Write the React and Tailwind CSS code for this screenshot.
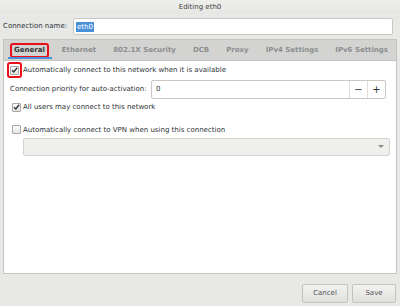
export default function App() {
  const tabs = ["General", "Ethernet", "802.1X Security", "DCB", "Proxy", "IPv4 Settings", "IPv6 Settings"];
  return (
    <div
      className="w-[400px] h-[306px] bg-[#e8e8e7] text-[#2e3436] text-[7px] flex flex-col overflow-hidden whitespace-nowrap"
      style={{ fontFamily: '"DejaVu Sans", sans-serif' }}
    >
      <div className="h-[14px] shrink-0 flex items-center justify-center bg-gradient-to-b from-[#eeeeec] to-[#e6e6e5] text-[#444]">
        Editing eth0
      </div>

      <div className="flex items-center h-[17px] shrink-0 mt-[4px] pl-[3px] pr-[7px]">
        <span className="w-[70px] shrink-0">Connection name:</span>
        <div className="flex-1 h-[17px] bg-white border border-[#cdc7c2] rounded-[2px] flex items-center pl-[2px]">
          <span className="bg-[#4a90d9] text-white px-[1px] leading-[10px]">eth0</span>
        </div>
      </div>

      <div className="mx-[3px] mt-[4px] flex flex-col h-[235px] shrink-0">
        <div className="h-[21px] shrink-0 bg-[#d3d3d2] border border-[#c4c4c3] border-b-0 flex items-center pl-[10px] gap-[17px] font-bold text-[#8b8e8f]">
          {tabs.map((t, i) =>
            i === 0 ? (
              <div key={t} className="relative h-full flex items-center -mx-[4px]">
                <span className="text-[#2e3436] border-2 border-[#e8101b] rounded-[3px] px-[2px] leading-[9px] py-[1px]">
                  {t}
                </span>
                <div className="absolute left-[-2px] right-[-3px] bottom-[1px] h-[2px] bg-[#4a90d9]" />
              </div>
            ) : (
              <span key={t}>{t}</span>
            )
          )}
        </div>

        <div className="flex-1 bg-white border border-[#c4c4c3] flex flex-col">
          <div className="flex items-center mt-[1px] ml-[3px]">
            <div className="w-[15px] h-[16px] border-2 border-[#e8101b] rounded-[3px] flex items-center justify-center">
              <Check checked />
            </div>
            <span className="ml-[1px]">Automatically connect to this network when it is available</span>
          </div>

          <div className="flex items-center mt-[2px] ml-[6px] mr-[10px]">
            <span className="w-[141px] shrink-0">Connection priority for auto-activation:</span>
            <div className="flex-1 h-[19px] bg-white border border-[#cdc7c2] rounded-[2px] flex items-center">
              <span className="flex-1 pl-[4px]">0</span>
              <div className="w-[18px] h-full border-l border-[#e0dedb] flex items-center justify-center text-[10px]">−</div>
              <div className="w-[18px] h-full border-l border-[#e0dedb] flex items-center justify-center text-[10px]">+</div>
            </div>
          </div>

          <div className="flex items-center mt-[3px] ml-[8px] gap-[2px]">
            <Check checked />
            <span>All users may connect to this network</span>
          </div>

          <div className="flex items-center mt-[12px] ml-[8px] gap-[2px]">
            <Check />
            <span>Automatically connect to VPN when using this connection</span>
          </div>

          <div className="ml-[19px] mr-[6px] mt-[3px] h-[18px] bg-[#efefee] border border-[#d6d3cf] rounded-[2px] flex items-center justify-end pr-[5px]">
            <svg width="6" height="4" viewBox="0 0 6 4">
              <path d="M0 0 L6 0 L3 3 Z" fill="#8a8a89" />
            </svg>
          </div>
        </div>
      </div>

      <div className="flex justify-end gap-[4px] mt-[10px] mr-[4px]">
        <button className="w-[46px] h-[19px] bg-gradient-to-b from-[#f2f2f1] to-[#e0e0df] border border-[#c4c1bd] rounded-[2px] text-[#555]">
          Cancel
        </button>
        <button className="w-[44px] h-[19px] bg-gradient-to-b from-[#f2f2f1] to-[#e0e0df] border border-[#c4c1bd] rounded-[2px] text-[#555]">
          Save
        </button>
      </div>
    </div>
  );
}

function Check({ checked }) {
  return (
    <div className="w-[9px] h-[9px] bg-gradient-to-b from-[#fafafa] to-[#e6e6e6] border border-[#a9a7a3] rounded-[1px] flex items-center justify-center">
      {checked && (
        <svg width="8" height="8" viewBox="0 0 8 8">
          <path d="M1.2 4.2 L3.2 6.2 L7 1.5" stroke="#2e3436" strokeWidth="1.6" fill="none" />
        </svg>
      )}
    </div>
  );
}
